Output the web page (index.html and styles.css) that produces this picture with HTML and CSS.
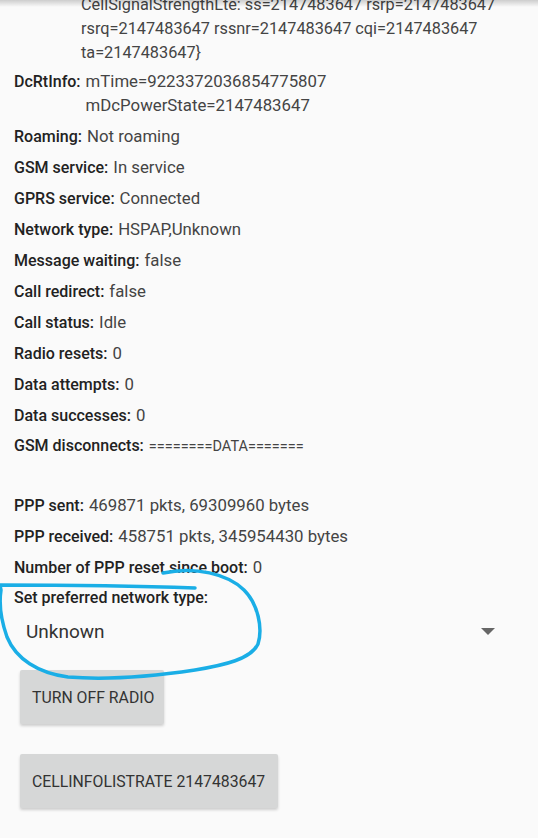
FILE: index.html
```html
<!DOCTYPE html>
<html>
<head>
<meta charset="utf-8">
<link rel="stylesheet" href="styles.css">
</head>
<body>
<div class="shadow"></div>
<div class="page">
  <div class="cont">
    <div>CellSignalStrengthLte: ss=2147483647 rsrp=2147483647</div>
    <div>rsrq=2147483647 rssnr=2147483647 cqi=2147483647</div>
    <div>ta=2147483647}</div>
  </div>
  <div class="row tall"><span class="lab">DcRtInfo:</span><span class="val">mTime=9223372036854775807<br>mDcPowerState=2147483647</span></div>
  <div class="row"><span class="lab">Roaming:</span><span class="val">Not roaming</span></div>
  <div class="row"><span class="lab">GSM service:</span><span class="val">In service</span></div>
  <div class="row"><span class="lab">GPRS service:</span><span class="val">Connected</span></div>
  <div class="row"><span class="lab">Network type:</span><span class="val">HSPAP,Unknown</span></div>
  <div class="row"><span class="lab">Message waiting:</span><span class="val">false</span></div>
  <div class="row"><span class="lab">Call redirect:</span><span class="val">false</span></div>
  <div class="row"><span class="lab">Call status:</span><span class="val">Idle</span></div>
  <div class="row"><span class="lab">Radio resets:</span><span class="val">0</span></div>
  <div class="row"><span class="lab">Data attempts:</span><span class="val">0</span></div>
  <div class="row"><span class="lab">Data successes:</span><span class="val">0</span></div>
  <div class="row"><span class="lab">GSM disconnects:</span><span class="val small">========DATA=======</span></div>
  <div class="blank"></div>
  <div class="row"><span class="lab">PPP sent:</span><span class="val">469871 pkts, 69309960 bytes</span></div>
  <div class="row"><span class="lab">PPP received:</span><span class="val">458751 pkts, 345954430 bytes</span></div>
  <div class="row"><span class="lab">Number of PPP reset since boot:</span><span class="val">0</span></div>
  <div class="row last"><span class="lab">Set preferred network type:</span></div>
  <div class="spinner"><span class="sel">Unknown</span><span class="arrow"></span></div>
  <div class="btn b1">TURN OFF RADIO</div>
  <div class="btn b2">CELLINFOLISTRATE 2147483647</div>
</div>
<svg class="mark" width="538" height="838" viewBox="0 0 538 838">
  <path d="M163,573 C195,566 228,574 244,590 C258,604 263,628 258,644 C251,659 225,665 195,670 C155,676 105,680 68,677 C38,673 16,659 7,637 C1,620 -1,603 1,590 L0,585 C60,585 140,586 195,588" fill="none" stroke="#1aaee6" stroke-width="3.5" stroke-linecap="round" stroke-linejoin="round"/>
</svg>
</body>
</html>
```
FILE: styles.css
```css
html, body {
  margin: 0;
  padding: 0;
  background: #fafafa;
  width: 538px;
  height: 838px;
  overflow: hidden;
}
body {
  position: relative;
  font-family: Roboto, "Liberation Sans", sans-serif;
  font-size: 16px;
  color: #444;
}
.shadow {
  position: absolute;
  left: 0;
  top: 0;
  width: 538px;
  height: 7px;
  background: linear-gradient(to bottom, rgba(0,0,0,0.18), rgba(0,0,0,0));
  z-index: 2;
}
.page {
  padding: 0 14px;
  margin-top: -7px;
}
.cont {
  margin-left: 67px;
  line-height: 24px;
  margin-bottom: 4px;
  white-space: nowrap;
  font-size: 16.3px;
}
.row {
  display: flex;
  align-items: baseline;
  height: 24px;
  line-height: 24px;
  margin-bottom: 7px;
  white-space: nowrap;
}
.row.tall {
  height: 48px;
}
.row.last {
  margin-bottom: 0;
}
.lab {
  color: #222;
  font-weight: 500;
  margin-right: 5px;
}
.val {
  font-size: 16.8px;
}
.val.small {
  font-size: 14.5px;
}
.blank {
  height: 21px;
  margin-bottom: 7px;
}
.spinner {
  height: 42px;
  display: flex;
  align-items: center;
  justify-content: space-between;
  padding-left: 12px;
  padding-right: 29px;
}
.sel {
  font-size: 19px;
  color: #333;
}
.arrow {
  width: 0;
  height: 0;
  border-left: 7px solid transparent;
  border-right: 7px solid transparent;
  border-top: 7px solid #666;
}
.btn {
  display: inline-flex;
  align-items: center;
  height: 54px;
  padding: 0 12px;
  margin-left: 6px;
  background: #d6d7d7;
  border-radius: 2px;
  box-shadow: 0 2px 3px rgba(0,0,0,0.18);
  color: #333;
  font-size: 15.8px;
  white-space: nowrap;
  box-sizing: border-box;
}
.b1 {
  margin-top: 18px;
  width: 144px;
}
.b2 {
  display: flex;
  margin-top: 30px;
  width: 258px;
}
.mark {
  position: absolute;
  left: 0;
  top: 0;
  z-index: 3;
}
```
